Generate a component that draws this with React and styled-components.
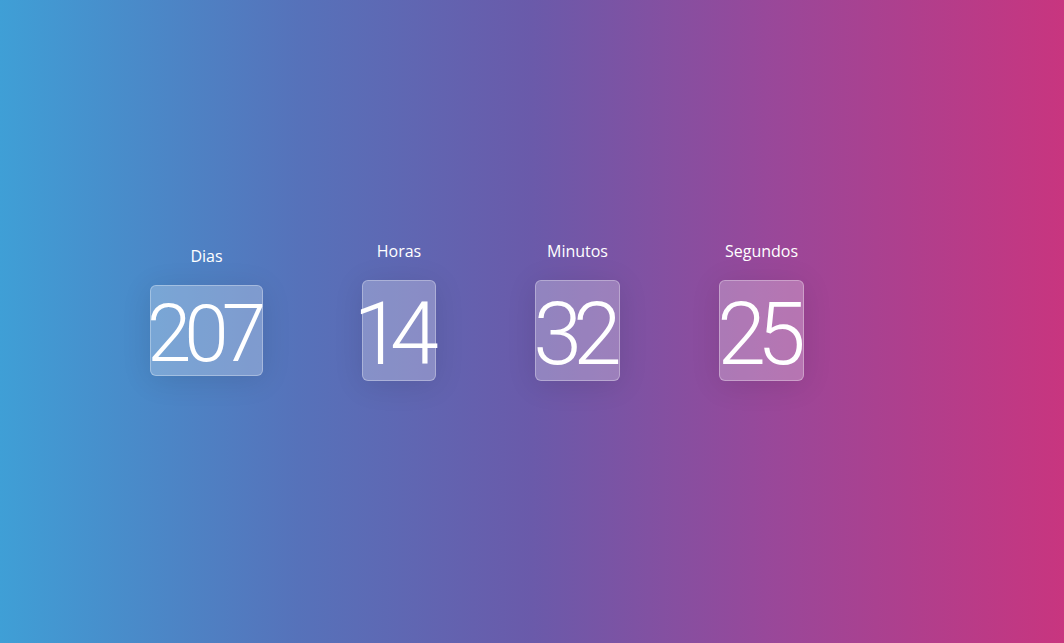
import React from "react";
import styled, { createGlobalStyle } from "styled-components";

const GlobalStyle = createGlobalStyle`
  html, body {
    margin: 0;
    padding: 0;
  }
  body {
    font-family: "Segoe UI", "Open Sans", "Noto Sans", sans-serif;
    color: #fff;
  }
`;

const Page = styled.div`
  min-height: 100vh;
  box-sizing: border-box;
  background: linear-gradient(to right, #3f9fd6 0%, #5672ba 28%, #6a5aaa 50%, #98489a 72%, #c8357f 100%);
  display: flex;
  align-items: center;
  padding: 0 0 21px 150px;
`;

const Row = styled.div`
  display: flex;
  align-items: center;
  gap: 99px;
`;

const Unit = styled.div`
  display: flex;
  flex-direction: column;
  align-items: center;
`;

const Label = styled.div`
  font-size: 16px;
  line-height: 21px;
  margin-bottom: 18px;
`;

const Box = styled.div`
  box-sizing: border-box;
  width: ${(p) => p.$width}px;
  display: flex;
  justify-content: center;
  font-family: Roboto, "Open Sans", sans-serif;
  font-weight: 300;
  font-size: ${(p) => p.$size}px;
  line-height: 1.03;
  padding-top: 0.09em;
  background: rgba(255, 255, 255, 0.26);
  border: 1px solid rgba(255, 255, 255, 0.3);
  border-radius: 6px;
  box-shadow: 0 4px 30px rgba(0, 0, 0, 0.1);
  white-space: nowrap;
`;

const Digits = styled.span`
  letter-spacing: ${(p) => p.$spacing}px;
  padding-right: ${(p) => -p.$spacing + p.$shift}px;
`;

const units = [
  { label: "Dias", value: "207", size: 80, width: 113, spacing: -7, shift: 0 },
  { label: "Horas", value: "14", size: 88, width: 74, spacing: -12, shift: 6 },
  { label: "Minutos", value: "32", size: 88, width: 85, spacing: -9, shift: 0 },
  { label: "Segundos", value: "25", size: 88, width: 85, spacing: -9, shift: 0 },
];

export default function App() {
  return (
    <>
      <GlobalStyle />
      <Page>
        <Row>
          {units.map((u) => (
            <Unit key={u.label}>
              <Label>{u.label}</Label>
              <Box $size={u.size} $width={u.width}>
                <Digits $spacing={u.spacing} $shift={u.shift}>
                  {u.value}
                </Digits>
              </Box>
            </Unit>
          ))}
        </Row>
      </Page>
    </>
  );
}
